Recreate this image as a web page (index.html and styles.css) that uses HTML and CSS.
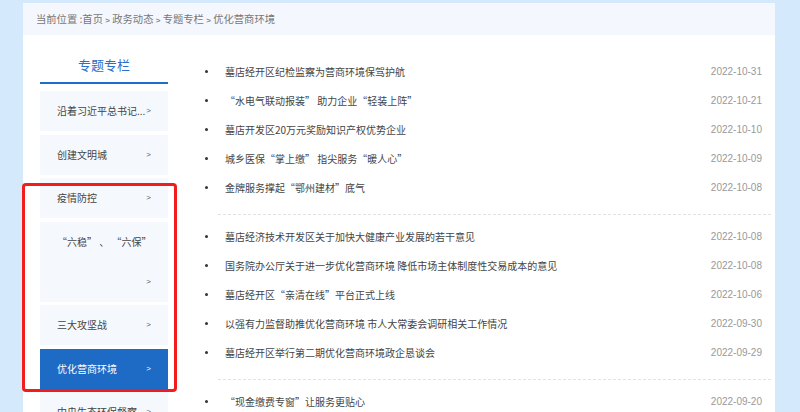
FILE: index.html
```html
<!DOCTYPE html>
<html lang="zh-CN">

<head>
  <meta charset="UTF-8">
  <meta name="viewport" content="width=device-width, initial-scale=1.0">
  <title>优化营商环境 - 专题专栏</title>
  <link rel="stylesheet" href="styles.css">
</head>

<body>
  <div class="page">
    <div class="crumbs">当前位置 :首页 <span class="sep">&gt;</span> 政务动态 <span class="sep">&gt;</span> 专题专栏 <span class="sep">&gt;</span> 优化营商环境</div>

    <div class="content">
      <div class="sidebar">
        <h2 class="side-title">专题专栏</h2>
        <ul class="side-menu">
          <li class="menu-item">沿着习近平总书记...<span class="arrow">&gt;</span></li>
          <li class="menu-item">创建文明城<span class="arrow">&gt;</span></li>
          <li class="menu-item">疫情防控<span class="arrow">&gt;</span></li>
          <li class="menu-item tall">“六稳” 、 “六保”<span class="arrow">&gt;</span></li>
          <li class="menu-item">三大攻坚战<span class="arrow">&gt;</span></li>
          <li class="menu-item active">优化营商环境<span class="arrow">&gt;</span></li>
          <li class="menu-item">中央生态环保督察<span class="arrow">&gt;</span></li>
        </ul>
      </div>

      <div class="news">
        <ul class="news-group">
          <li><span class="title">墓店经开区纪检监察为营商环境保驾护航</span><span class="date">2022-10-31</span></li>
          <li><span class="title">“水电气联动报装” 助力企业“轻装上阵”</span><span class="date">2022-10-21</span></li>
          <li><span class="title">墓店开发区20万元奖励知识产权优势企业</span><span class="date">2022-10-10</span></li>
          <li><span class="title">城乡医保“掌上缴” 指尖服务“暖人心”</span><span class="date">2022-10-09</span></li>
          <li><span class="title">金牌服务撑起“鄂州建材”底气</span><span class="date">2022-10-08</span></li>
        </ul>
        <ul class="news-group">
          <li><span class="title">墓店经济技术开发区关于加快大健康产业发展的若干意见</span><span class="date">2022-10-08</span></li>
          <li><span class="title">国务院办公厅关于进一步优化营商环境 降低市场主体制度性交易成本的意见</span><span class="date">2022-10-08</span></li>
          <li><span class="title">墓店经开区“亲清在线”平台正式上线</span><span class="date">2022-10-06</span></li>
          <li><span class="title">以强有力监督助推优化营商环境 市人大常委会调研相关工作情况</span><span class="date">2022-09-30</span></li>
          <li><span class="title">墓店经开区举行第二期优化营商环境政企恳谈会</span><span class="date">2022-09-29</span></li>
        </ul>
        <ul class="news-group">
          <li><span class="title">“现金缴费专窗”让服务更贴心</span><span class="date">2022-09-20</span></li>
          <li><span class="title">墓店经开区优化营商环境工作推进会召开</span><span class="date">2022-09-16</span></li>
        </ul>
      </div>
    </div>
  </div>

  <!-- annotation drawn over the screenshot -->
  <div class="highlight"></div>
</body>

</html>
```

FILE: styles.css
```css
body {
  margin: 0;
  background-color: #d5e9fd;
  font-family: "Noto Sans CJK SC", "Liberation Sans", sans-serif;
  color: #333;
  height: 412px;
  overflow: hidden;
}

ul {
  list-style: none;
  margin: 0;
  padding: 0;
}

.page {
  width: 752px;
  margin: 3px 0 0 23px;
  background: white;
  min-height: 420px;
}

.crumbs {
  height: 32px;
  line-height: 32px;
  padding-left: 13px;
  background-color: #f4f8fe;
  font-size: 10.3px;
  color: #777;
}

.crumbs .sep {
  font-family: "Liberation Sans", sans-serif;
  font-weight: bold;
  font-size: 8px;
  color: #888;
}

.content {
  display: flex;
  padding: 0 4px 0 17px;
}

.sidebar {
  width: 128px;
  flex-shrink: 0;
  margin-top: 13px;
}

.side-title {
  margin: 0 0 7px;
  height: 34px;
  line-height: 34px;
  text-align: center;
  font-size: 13px;
  font-weight: normal;
  color: #2a6fc9;
  border-bottom: 2px solid #1e6ccb;
}

.menu-item {
  display: flow-root;
  height: 40px;
  line-height: 40px;
  padding: 0 17px;
  margin-bottom: 3.5px;
  background-color: #f5f9fe;
  font-size: 10px;
  color: #444;
  white-space: nowrap;
}

.menu-item .arrow {
  float: right;
  font-family: "Liberation Sans", sans-serif;
  font-size: 8px;
  color: #555;
}

.menu-item.tall {
  height: 80px;
  white-space: pre;
}

.menu-item.tall .arrow {
  float: none;
  display: block;
  text-align: right;
}

.menu-item.active {
  background-color: #1e6bc6;
  color: white;
}

.menu-item.active .arrow {
  color: white;
}

.news {
  flex: 1;
  margin-left: 50px;
  margin-top: 14px;
}

.news-group {
  border-top: 1px dashed #e2e2e2;
  padding: 7px 0 12px;
}

.news-group:first-child {
  border-top-color: transparent;
}

.news-group li {
  display: flex;
  align-items: center;
  height: 29px;
  margin-left: -13px;
  padding-right: 9px;
  font-size: 10px;
}

.news-group li:before {
  content: "";
  width: 3px;
  height: 3px;
  border-radius: 50%;
  background-color: #333;
  margin-right: 17px;
  flex-shrink: 0;
}

.news-group .title {
  flex: 1;
  color: #444;
  white-space: nowrap;
}

.news-group .date {
  font-family: "Liberation Sans", sans-serif;
  color: #999;
}

.highlight {
  position: absolute;
  left: 22px;
  top: 183px;
  width: 149px;
  height: 203px;
  border: 3px solid #f21c1c;
  border-radius: 4px;
}
```
